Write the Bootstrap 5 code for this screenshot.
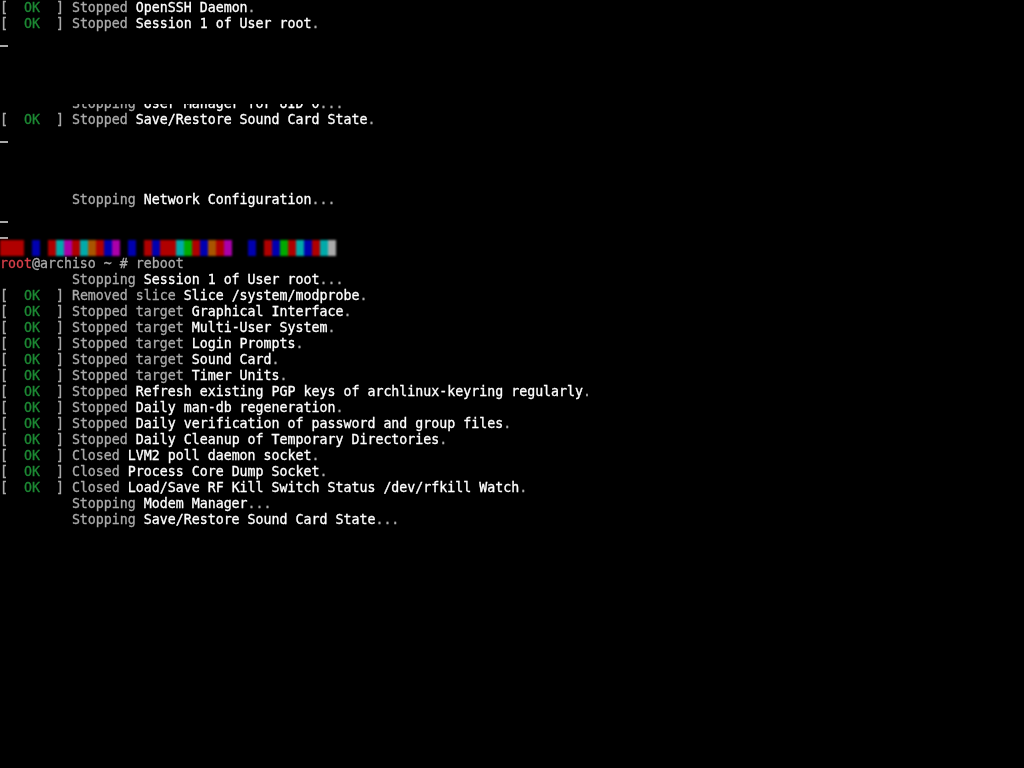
<!DOCTYPE html>
<html lang="en">
<head>
<meta charset="utf-8">
<title>reboot</title>
<link href="https://cdn.jsdelivr.net/npm/bootstrap@5.3.0/dist/css/bootstrap.min.css" rel="stylesheet">
<style>
html,body{background:#000;height:100%;margin:0;overflow:hidden}
.tty{font-family:"DejaVu Sans Mono","Liberation Mono",monospace;font-size:13.28px;line-height:16px;color:#aaa;filter:blur(.4px);-webkit-text-stroke:.3px currentColor}
.ln{height:16px;overflow:hidden;white-space:pre}
.ln-half{clip-path:inset(8px 0 0 0)}
.w{color:#fff}
.g{color:#1d8a34}
.r{color:#d8404a}
.cur{display:block;width:8px;height:2px;background:#aaa;margin-top:13px}
.bar{height:16px;filter:blur(.9px)}
.bar i{display:block;width:8px;height:16px}
.cR{background:#b00000}.cK{background:#000}.cB{background:#0000b0}.cT{background:#00aaaa}.cM{background:#aa00aa}.cO{background:#aa5500}.cG{background:#00aa00}.cW{background:#aaaaaa}
</style>
</head>
<body>
<div class="tty container-fluid p-0" id="t">
<div class="ln">[  <span class="g">OK</span>  ] Stopped <span class="w">OpenSSH Daemon</span>.</div>
<div class="ln">[  <span class="g">OK</span>  ] Stopped <span class="w">Session 1 of User root</span>.</div>
<div class="ln"><span class="cur"></span></div>
<div class="ln"></div>
<div class="ln"></div>
<div class="ln"></div>
<div class="ln ln-half">         Stopping <span class="w">User Manager for UID 0</span>...</div>
<div class="ln">[  <span class="g">OK</span>  ] Stopped <span class="w">Save/Restore Sound Card State</span>.</div>
<div class="ln"><span class="cur"></span></div>
<div class="ln"></div>
<div class="ln"></div>
<div class="ln"></div>
<div class="ln">         Stopping <span class="w">Network Configuration</span>...</div>
<div class="ln"><span class="cur"></span></div>
<div class="ln"><span class="cur"></span></div>
<div class="bar d-flex" id="b"><i class="cR"></i><i class="cR"></i><i class="cR"></i><i class="cK"></i><i class="cB"></i><i class="cK"></i><i class="cR"></i><i class="cT"></i><i class="cM"></i><i class="cR"></i><i class="cT"></i><i class="cO"></i><i class="cR"></i><i class="cB"></i><i class="cM"></i><i class="cK"></i><i class="cB"></i><i class="cK"></i><i class="cR"></i><i class="cB"></i><i class="cR"></i><i class="cR"></i><i class="cT"></i><i class="cG"></i><i class="cR"></i><i class="cB"></i><i class="cO"></i><i class="cR"></i><i class="cM"></i><i class="cK"></i><i class="cK"></i><i class="cB"></i><i class="cK"></i><i class="cR"></i><i class="cB"></i><i class="cG"></i><i class="cR"></i><i class="cT"></i><i class="cB"></i><i class="cR"></i><i class="cT"></i><i class="cW"></i></div>
<div class="ln"><span class="r">root</span>@archiso ~ # reboot</div>
<div class="ln">         Stopping <span class="w">Session 1 of User root</span>...</div>
<div class="ln">[  <span class="g">OK</span>  ] Removed slice <span class="w">Slice /system/modprobe</span>.</div>
<div class="ln">[  <span class="g">OK</span>  ] Stopped target <span class="w">Graphical Interface</span>.</div>
<div class="ln">[  <span class="g">OK</span>  ] Stopped target <span class="w">Multi-User System</span>.</div>
<div class="ln">[  <span class="g">OK</span>  ] Stopped target <span class="w">Login Prompts</span>.</div>
<div class="ln">[  <span class="g">OK</span>  ] Stopped target <span class="w">Sound Card</span>.</div>
<div class="ln">[  <span class="g">OK</span>  ] Stopped target <span class="w">Timer Units</span>.</div>
<div class="ln">[  <span class="g">OK</span>  ] Stopped <span class="w">Refresh existing PGP keys of archlinux-keyring regularly</span>.</div>
<div class="ln">[  <span class="g">OK</span>  ] Stopped <span class="w">Daily man-db regeneration</span>.</div>
<div class="ln">[  <span class="g">OK</span>  ] Stopped <span class="w">Daily verification of password and group files</span>.</div>
<div class="ln">[  <span class="g">OK</span>  ] Stopped <span class="w">Daily Cleanup of Temporary Directories</span>.</div>
<div class="ln">[  <span class="g">OK</span>  ] Closed <span class="w">LVM2 poll daemon socket</span>.</div>
<div class="ln">[  <span class="g">OK</span>  ] Closed <span class="w">Process Core Dump Socket</span>.</div>
<div class="ln">[  <span class="g">OK</span>  ] Closed <span class="w">Load/Save RF Kill Switch Status /dev/rfkill Watch</span>.</div>
<div class="ln">         Stopping <span class="w">Modem Manager</span>...</div>
<div class="ln">         Stopping <span class="w">Save/Restore Sound Card State</span>...</div>
</div>
<script src="https://cdn.jsdelivr.net/npm/bootstrap@5.3.0/dist/js/bootstrap.bundle.min.js"></script>
</body>
</html>
